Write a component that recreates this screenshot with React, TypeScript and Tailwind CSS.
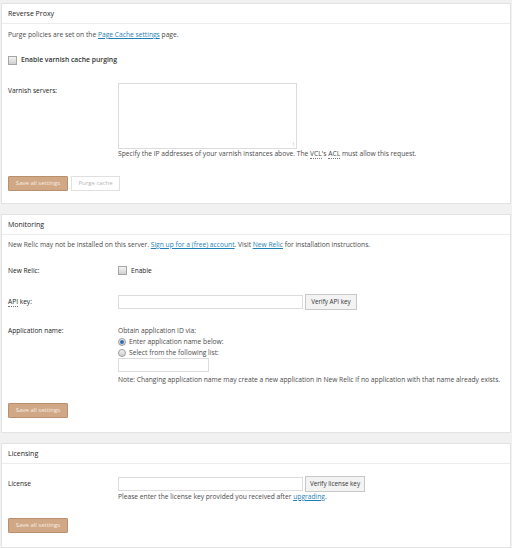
import React from "react"

const font = { fontFamily: "'Open Sans', 'Noto Sans', sans-serif" }

function Panel({ title, children, className }: { title: string; children: React.ReactNode; className?: string }) {
  return (
    <div className={"mx-[1px] bg-white border border-[#e3e3e3] " + (className ?? "")}>
      <div className="h-[20px] border-b border-[#ececec] px-[6px] text-[7px] leading-[19px] text-[#222]">{title}</div>
      <div className="px-[6px]">{children}</div>
    </div>
  )
}

function SaveButton({ className }: { className?: string }) {
  return (
    <button className={"h-[15px] w-[60px] rounded-[1px] border border-[#b98f6c] bg-[#d1a886] text-[6px] leading-[13px] text-[#f7ede4] " + (className ?? "")}>
      Save all settings
    </button>
  )
}

function Checkbox() {
  return <span className="inline-block h-[9px] w-[9px] border border-[#a5a5a5] bg-gradient-to-b from-[#f4f4f4] to-[#cfcfcf]" />
}

function Radio({ checked }: { checked?: boolean }) {
  return (
    <span className="inline-flex h-[8px] w-[8px] items-center justify-center rounded-full border border-[#9c9c9c] bg-gradient-to-b from-[#f4f4f4] to-[#cdcdcd]">
      {checked && <span className="h-[4px] w-[4px] rounded-full bg-[#2f6fb2]" />}
    </span>
  )
}

function Link({ children }: { children: React.ReactNode }) {
  return <span className="text-[#1f7fb8] underline">{children}</span>
}

function Abbr({ children }: { children: React.ReactNode }) {
  return <span className="border-b border-dotted border-[#777]">{children}</span>
}

export default function App() {
  return (
    <div className="min-h-[548px] w-[512px] bg-[#f1f1f1] pt-[3px] text-[6.7px] text-[#4a4a4a]" style={font}>
      <Panel title="Reverse Proxy" className="h-[201px]">
        <p className="mt-[6px] leading-[10px]">
          Purge policies are set on the <Link>Page Cache settings</Link> page.
        </p>
        <label className="mt-[15px] flex h-[10px] items-center gap-[4px]">
          <Checkbox />
          <span className="text-[6.8px] font-semibold text-[#333]">Enable varnish cache purging</span>
        </label>
        <div className="mt-[18px] flex">
          <div className="w-[110px] pt-[3px] text-[6.6px] leading-[10px] text-[#222]">Varnish servers:</div>
          <div>
            <div className="relative h-[66px] w-[179px] border border-[#dcdcdc] bg-white">
              <span className="absolute bottom-[1px] right-[2px] text-[5px] leading-[5px] text-[#aaa]">⁞</span>
            </div>
            <p className="leading-[10px]">
              Specify the IP addresses of your varnish instances above. The <Abbr>VCL</Abbr>'s <Abbr>ACL</Abbr> must allow this request.
            </p>
          </div>
        </div>
        <div className="mt-[17px] flex gap-[3px]">
          <SaveButton />
          <button className="h-[15px] w-[49px] border border-[#e0e0e0] bg-white text-[6px] leading-[13px] text-[#b5b5b5]">Purge cache</button>
        </div>
      </Panel>

      <Panel title="Monitoring" className="mt-[10px] h-[219px]">
        <p className="mt-[5px] leading-[10px]">
          New Relic may not be installed on this server. <Link>Sign up for a (free) account</Link>. Visit <Link>New Relic</Link> for installation instructions.
        </p>
        <div className="mt-[16px] flex h-[10px] items-center">
          <div className="w-[110px] text-[6.6px] text-[#222]">New Relic:</div>
          <label className="flex items-center gap-[4px]">
            <Checkbox />
            <span className="text-[6.6px] text-[#222]">Enable</span>
          </label>
        </div>
        <div className="mt-[18px] flex h-[16px] items-center">
          <div className="w-[110px] text-[6.6px] text-[#222]">
            <Abbr>API</Abbr> key:
          </div>
          <div className="h-[14px] w-[185px] border border-[#dcdcdc] bg-white" />
          <button className="ml-[2px] h-[16px] w-[52px] border border-[#c8c8c8] bg-[#f3f3f3] text-[6.3px] text-[#333]">Verify API key</button>
        </div>
        <div className="mt-[16px] flex">
          <div className="w-[110px] text-[6.6px] leading-[10px] text-[#222]">Application name:</div>
          <div className="leading-[10px]">
            <div>Obtain application ID via:</div>
            <label className="flex h-[11px] items-center gap-[3px]">
              <Radio checked />
              <span>Enter application name below:</span>
            </label>
            <label className="flex h-[11px] items-center gap-[3px]">
              <Radio />
              <span>Select from the following list:</span>
            </label>
            <div className="h-[14px] w-[91px] border border-[#dcdcdc] bg-white" />
            <p className="mt-[3px]">
              Note: Changing application name may create a new application in New Relic if no application with that name already exists.
            </p>
          </div>
        </div>
        <SaveButton className="mt-[18px]" />
      </Panel>

      <Panel title="Licensing" className="mt-[10px] h-[105px]">
        <div className="mt-[12px] flex">
          <div className="w-[110px] pt-[3px] text-[6.6px] leading-[10px] text-[#222]">License</div>
          <div>
            <div className="flex items-center">
              <div className="h-[14px] w-[185px] border border-[#dcdcdc] bg-white" />
              <button className="ml-[2px] h-[16px] w-[60px] border border-[#c8c8c8] bg-[#f3f3f3] text-[6.3px] text-[#333]">Verify license key</button>
            </div>
            <p className="leading-[9px]">
              Please enter the license key provided you received after <Link>upgrading</Link>.
            </p>
          </div>
        </div>
        <SaveButton className="mt-[17px]" />
      </Panel>
    </div>
  )
}
